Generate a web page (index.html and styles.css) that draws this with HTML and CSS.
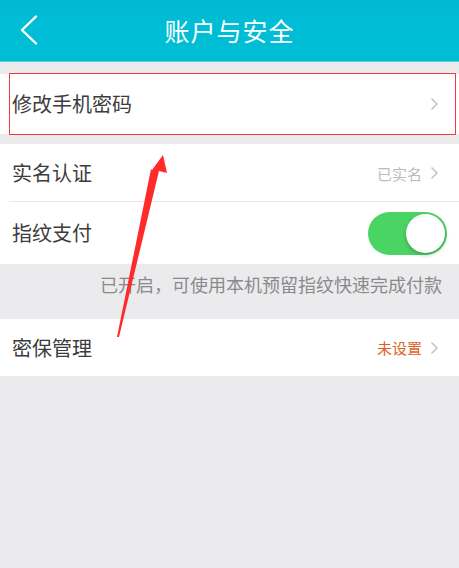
FILE: index.html
```html
<!DOCTYPE html>
<html lang="zh-CN">
<head>
<meta charset="utf-8">
<title>账户与安全</title>
<link rel="stylesheet" href="styles.css">
</head>
<body>
<div class="page">
  <header class="topbar">
    <svg class="back" width="20" height="30" viewBox="0 0 20 30"><polyline points="17,1.5 3,15 17,28.5" fill="none" stroke="#fff" stroke-width="2.4" stroke-linecap="round" stroke-linejoin="round"/></svg>
    <h1 class="title">账户与安全</h1>
  </header>

  <section class="group group-first">
    <div class="row row-pwd">
      <span class="label">修改手机密码</span>
      <span class="value"><svg class="chev" width="9" height="14" viewBox="0 0 9 14"><polyline points="1.5,1.5 7,7 1.5,12.5" fill="none" stroke="#c4c4c8" stroke-width="1.6"/></svg></span>
      <span class="mark"></span>
    </div>
  </section>

  <section class="group group-second">
    <div class="row row-real">
      <span class="label">实名认证</span>
      <span class="value muted">已实名<svg class="chev" width="9" height="14" viewBox="0 0 9 14"><polyline points="1.5,1.5 7,7 1.5,12.5" fill="none" stroke="#c4c4c8" stroke-width="1.6"/></svg></span>
    </div>
    <div class="row row-finger">
      <span class="label">指纹支付</span>
      <span class="toggle"><span class="knob"></span></span>
    </div>
  </section>

  <p class="hint">已开启，可使用本机预留指纹快速完成付款</p>

  <section class="group">
    <div class="row row-secq">
      <span class="label">密保管理</span>
      <span class="value warn">未设置<svg class="chev" width="9" height="14" viewBox="0 0 9 14"><polyline points="1.5,1.5 7,7 1.5,12.5" fill="none" stroke="#c4c4c8" stroke-width="1.6"/></svg></span>
    </div>
  </section>

  <svg class="arrow" width="459" height="568" viewBox="0 0 459 568">
    <polygon points="163,155 167,173 159,171 119,337 117,337 151,169 152,170" fill="#ff2a2a"/>
  </svg>
</div>
</body>
</html>
```

FILE: styles.css
```css
* { box-sizing: border-box; margin: 0; padding: 0; }
html, body { width: 459px; height: 568px; overflow: hidden; }
body {
  background: #ebebed;
  font-family: "Noto Sans CJK SC", "Noto Sans", sans-serif;
  color: #333;
}
.page { position: relative; width: 459px; height: 568px; }

.topbar {
  height: 62px;
  background: linear-gradient(#00b8cf, #00bdd6 40%, #00bdd6);
  border-bottom: 1px solid #56cfe0;
  display: flex;
  align-items: center;
  justify-content: center;
  position: relative;
}
.back { position: absolute; left: 19px; top: 15px; }
.title {
  font-size: 25px;
  font-weight: 400;
  color: #fff;
  letter-spacing: 1px;
  line-height: 1;
  margin-top: -1px;
}

.group { background: #fff; }
.group-first { margin-top: 12px; }
.group-second { margin-top: 10px; }

.row {
  display: flex;
  align-items: center;
  justify-content: space-between;
  padding: 0 20px 0 12px;
  font-size: 20px;
  color: #3c3c3c;
}
.row-pwd { height: 60px; position: relative; }
.row-real { height: 58px; position: relative; }
.row-finger { height: 62px; padding-right: 12px; }
.row-secq { height: 57px; }

.row-real::after {
  content: "";
  position: absolute;
  left: 9px; right: 0; bottom: 0;
  height: 1px;
  background: #e8e8ea;
}

.mark {
  position: absolute;
  left: 9px;
  top: -1px;
  width: 447px;
  height: 62px;
  border: 1px solid #f23b3b;
  pointer-events: none;
}

.label { line-height: 1; }
.value {
  display: flex;
  align-items: center;
  gap: 8px;
  font-size: 15px;
  line-height: 1;
}
.muted { color: #bbbbbb; }
.warn { color: #e0622a; }
.chev { display: block; }

.toggle {
  width: 79px;
  height: 43px;
  border-radius: 22px;
  background: #4ad464;
  position: relative;
  display: block;
}
.knob {
  position: absolute;
  right: 2px;
  top: 2px;
  width: 39px;
  height: 39px;
  border-radius: 50%;
  background: #fff;
  box-shadow: 0 2px 4px rgba(0,0,0,0.25);
}

.hint {
  height: 55px;
  padding: 8px 17px 0 0;
  text-align: right;
  font-size: 18px;
  color: #8a8a8a;
  line-height: 24px;
}

.arrow { position: absolute; left: 0; top: 0; pointer-events: none; }
```
